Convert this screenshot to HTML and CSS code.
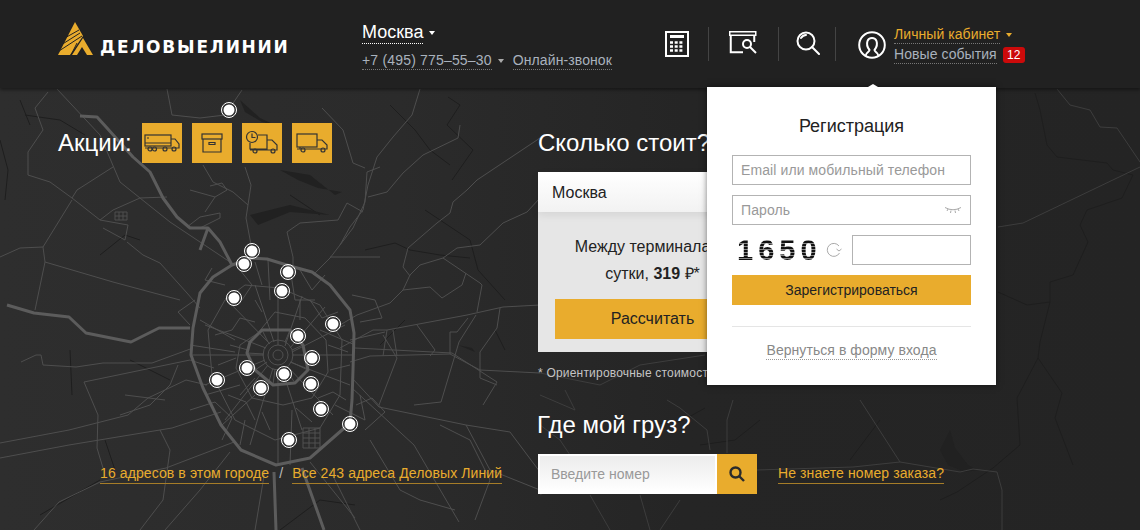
FILE: index.html
```html
<!DOCTYPE html>
<html lang="ru">
<head>
    <meta charset="UTF-8">
    <meta name="viewport" content="width=device-width, initial-scale=1.0">
    <link rel="stylesheet" href="styles.css">
    <title>Деловые Линии</title>
</head>
<body>
<div class="page">
    <svg class="map" width="1140" height="442" viewBox="0 88 1140 442">
        <g class="river">
            <path d="M1035 93L1040 110L1047 145L1057 157L1107 163L1113 170L1133 175L1122 198L1087 210L1080 225L1088 242L1073 275L1050 282L1050 302L1027 305L998 292"/>
            <path d="M1050 302L1040 342L1038 358L1017 398L1020 445L993 468L957 492L940 500"/>
            <path d="M1038 358L1062 393L1055 418L1073 465"/>
            <path d="M448 97L460 105L447 125L473 150L452 180M390 105L415 130L430 150L450 165M425 210L470 240L478 270L505 300"/>
            <path d="M365 250L395 243L410 250L440 255L470 258M405 320L380 345M495 330L505 350"/>
            <path d="M0 140L8 170L5 200M25 115L60 120L85 135M290 195L320 215M100 255L125 235L140 240M20 100L30 125"/>
            <path d="M70 350L72 395M105 440L115 470M280 530L320 500L355 505M40 515L100 480M130 360L170 380"/>
            <path d="M640 425L680 422L705 408M700 445L735 440L760 420M850 460L880 420"/>
        </g>
        <path class="lake" d="M240 100L260 118L275 125L262 122L245 112ZM280 170L310 175L335 195L342 192L318 188L298 180ZM250 215L290 205L330 215L290 212L258 225ZM458 345L475 352L472 348ZM950 430L955 448L968 465L978 470L965 472L948 465L940 450Z"/>
        <g class="road">
            <path d="M420 89L412 115L393 137L377 157L368 185L363 210L350 227L340 245M460 125L458 138L423 155L403 173L387 192L368 197"/>
            <path d="M540 138L477 180L467 190L453 202L450 213L437 223L408 248L403 267L410 276"/>
            <path d="M540 198L527 212L503 223L480 245L457 248L443 258L420 265L410 275L403 290L390 303L357 315L340 325"/>
            <path d="M443 258L480 283L482 285L477 312M340 348L373 330L387 330L467 315L503 307L540 305"/>
            <path d="M403 290L430 287L442 298L462 285L466 273M350 362L370 356L450 354L480 370L540 373"/>
            <path d="M417 325L435 350L430 356M387 330L383 356M393 330L397 356M450 354L450 332L457 332L468 318M500 308L497 328L480 352L480 378L497 385"/>
            <path d="M57 89L100 135L120 182L170 222L230 262M48 92L35 108L43 130L28 152L28 175L50 182L72 198L100 220L128 225L125 240L103 228"/>
            <path d="M167 89L172 115L200 118L225 115L242 90M72 198L77 190L113 167M0 257L20 248L43 247L45 262L113 282L180 300"/>
            <path d="M43 247L72 200M127 242L143 255L160 263L187 293L200 308M203 165L213 182L233 192L248 205M245 167L251 185L246 218L252 250"/>
            <path d="M187 227L200 217L220 213L220 218L200 228ZM380 167L367 172L365 202L353 228L330 258L313 275M330 257L380 257"/>
            <path d="M287 232L300 223L338 220L347 203L363 212M287 232L293 257L293 267M322 108L343 130L353 163L365 168M100 220L113 210L140 198L167 197"/>
            <path d="M115 212H127V220H115ZM119 212V220M123 212V220M115 216H127M45 262L35 310M190 190L215 197L227 190L222 183L210 186M205 212L215 197"/>
            <path d="M0 458L69 445L172 428L221 412M0 443L69 430L128 415L148 398L186 380L207 385M84 382L190 360L214 368M84 382L98 415L97 448L103 468"/>
            <path d="M34 530L59 502L100 482L166 468L234 442M21 362L36 355L41 355L43 365L76 367L103 363L152 363L193 348M355 348L452 353L497 382L483 405"/>
            <path d="M352 378L379 407L466 425L510 432L540 472M352 388L414 445L459 522M310 462L355 518M379 405L397 358L383 335M414 405L441 402L459 342L476 315"/>
            <path d="M120 415L150 405L170 385L178 365M125 395L165 400M160 430L170 450L163 500L140 530M230 452L200 490L165 530M265 470L255 530"/>
            <path d="M330 470L345 500L360 530M370 440L400 490L420 500L455 510M440 425L470 440L490 480L475 520M466 425L490 470L540 490"/>
        </g>
        <g class="road-far">
            <path d="M540 305L620 290L705 280M540 373L600 385L640 365L705 355"/>
            <path d="M667 400L680 408L707 430L710 450M733 400L727 420L727 453M860 400L900 462L960 472L973 469L997 472L1002 490L1002 530M757 470L853 467L900 462"/>
            <path d="M998 227L1023 223L1140 167M1057 89L1070 105L1090 110L1100 127L1117 128L1140 162"/>
            <path d="M540 495L580 470L560 440L540 425M590 495L610 530M640 495L650 530M680 500L660 530M540 395L575 410L565 390"/>
        </g>
        <g class="street">
            <path d="M278 345V288M285 346L302 296M290 348L325 307M292 352L345 325M292 355H352M290 362L350 385M287 366L333 415M282 369L302 430M278 369V465M273 368L250 445M268 365L225 420M265 360L205 385M264 355H192M266 348L205 325M270 344L225 298M274 342L255 285"/>
            <circle cx="278" cy="355" r="5"/>
            <circle cx="278" cy="355" r="10"/>
            <circle cx="278" cy="355" r="15"/>
            <path d="M258 333L240 345L236 368L252 398L283 405L312 398L328 372L326 340L305 318L275 312Z"/>
            <path d="M225 300L208 330L212 375L235 420L275 440L320 428L340 395L342 340L320 305L280 288L245 285Z"/>
            <path d="M255 262L262 285M268 260L270 300M290 268L295 300H315M300 270L312 290L325 275M200 320L235 340M190 345L235 352M205 395L240 385M222 425L255 395M290 465L292 410"/>
            <path d="M303 428H320V448H303ZM309 428V448M315 428V448M303 433H320M303 438H320M303 443H320"/>
            <path d="M225 285L205 280L212 268M300 300V320M350 340L385 332M320 330L355 345M335 405L365 420L360 395M245 420L240 445"/>
            <path d="M215 335L232 330L240 318L255 322M218 365L236 358M228 395L246 402L255 420M255 300L262 312M240 270L252 285L242 300M310 300L322 318L338 312"/>
            <path d="M328 345L348 352M330 370L350 365M318 398L333 392L346 400M296 408L312 422M262 412L270 430M255 378L240 395M248 350L230 345"/>
            <path d="M262 330L268 342M290 330L285 342M303 345L292 350M308 370L291 362M295 383L285 368M273 385L275 369M255 370L267 362M247 353L264 354"/>
            <path d="M190 410L215 402L232 418L222 440M195 300L178 312L190 325M352 295L375 300L382 318L360 322M356 405L372 398L385 412L365 430"/>
        </g>
        <g class="ring">
            <path d="M232 265L252 258L267 259L290 266L312 272L330 285L350 310L354 333L353 370L352 400L350 423L310 458L276 465L241 450L221 425L203 388L191 355L193 328L200 293L213 277L232 265"/>
            <path d="M262 330H290L303 345L308 370L295 383L273 385L255 370L247 353L250 342Z"/>
            <path d="M80 116L97 117L107 128L133 157L150 172L163 198L177 217L190 228L208 228L220 242L232 265M208 228L200 250"/>
            <path d="M7 305L34 313L69 317L86 333L131 342L159 328L190 328M274 472L276 530M302 468L324 530"/>
        </g>
        <g class="pin">
            <circle cx="229" cy="110" r="5.5"/><circle class="pin-ring" cx="229" cy="110" r="7.5"/>
            <circle cx="252" cy="251" r="5.5"/><circle class="pin-ring" cx="252" cy="251" r="7.5"/>
            <circle cx="244" cy="264" r="5.5"/><circle class="pin-ring" cx="244" cy="264" r="7.5"/>
            <circle cx="288" cy="272" r="5.5"/><circle class="pin-ring" cx="288" cy="272" r="7.5"/>
            <circle cx="282" cy="291" r="5.5"/><circle class="pin-ring" cx="282" cy="291" r="7.5"/>
            <circle cx="234" cy="298" r="5.5"/><circle class="pin-ring" cx="234" cy="298" r="7.5"/>
            <circle cx="333" cy="324" r="5.5"/><circle class="pin-ring" cx="333" cy="324" r="7.5"/>
            <circle cx="298" cy="336" r="5.5"/><circle class="pin-ring" cx="298" cy="336" r="7.5"/>
            <circle cx="312" cy="358" r="5.5"/><circle class="pin-ring" cx="312" cy="358" r="7.5"/>
            <circle cx="247" cy="368" r="5.5"/><circle class="pin-ring" cx="247" cy="368" r="7.5"/>
            <circle cx="284" cy="374" r="5.5"/><circle class="pin-ring" cx="284" cy="374" r="7.5"/>
            <circle cx="217" cy="380" r="5.5"/><circle class="pin-ring" cx="217" cy="380" r="7.5"/>
            <circle cx="261" cy="388" r="5.5"/><circle class="pin-ring" cx="261" cy="388" r="7.5"/>
            <circle cx="311" cy="384" r="5.5"/><circle class="pin-ring" cx="311" cy="384" r="7.5"/>
            <circle cx="321" cy="409" r="5.5"/><circle class="pin-ring" cx="321" cy="409" r="7.5"/>
            <circle cx="350" cy="424" r="5.5"/><circle class="pin-ring" cx="350" cy="424" r="7.5"/>
            <circle cx="289" cy="440" r="5.5"/><circle class="pin-ring" cx="289" cy="440" r="7.5"/>
        </g>
    </svg>

    <header class="top">
        <a class="logo">
            <svg width="36" height="34" viewBox="0 0 36 34">
                <path fill="#e9ac2d" d="M17 0L25 14L12 33H0Z"/>
                <path fill="#e9ac2d" d="M25 16L35 33H29L24 25L19 33H14Z"/>
                <path stroke="#212121" stroke-width="1" fill="none" d="M21 8L5 17M22 11L3 23M24 14L1 29M19 21L13 33"/>
            </svg>
            <span class="logo-text">ДЕЛОВЫЕЛИНИИ</span>
        </a>

        <div class="contacts">
            <div class="city-line"><span class="city">Москва</span><i class="caret caret-white"></i></div>
            <div class="phone-line">
                <span class="dotted phone">+7 (495) 775–55–30</span><i class="caret caret-gray"></i>
                <span class="dotted call">Онлайн-звонок</span>
            </div>
        </div>

        <nav class="tools">
            <a class="tool tool-calc">
                <svg width="24" height="26" viewBox="0 0 24 26" fill="none" stroke="#fff">
                    <rect x="1" y="1" width="22" height="24" stroke-width="2"/>
                    <path d="M5 5.5H19" stroke-width="3"/>
                    <path d="M5 11.5H19M5 15.5H19M5 19.5H19" stroke-width="2.5" stroke-dasharray="3 1.7"/>
                </svg>
            </a>
            <a class="tool tool-track">
                <svg width="28" height="23" viewBox="0 0 28 23" fill="none" stroke="#fff" stroke-width="1.500">
                    <rect x="0.750" y="0.750" width="26" height="3.500"/>
                    <path d="M1.750 4V21.250H14M25.250 4V11" stroke-width="2"/>
                    <circle cx="18" cy="13" r="4" stroke-width="2"/>
                    <path d="M21 16L27 22" stroke-width="2"/>
                </svg>
            </a>
            <a class="tool tool-search">
                <svg width="24" height="24" viewBox="0 0 24 24" fill="none" stroke="#fff" stroke-width="2">
                    <circle cx="10" cy="10" r="8.5"/>
                    <path d="M5 7Q7 4 10 4M16 16L23 23" stroke-linecap="round"/>
                </svg>
            </a>
        </nav>

        <div class="account">
            <svg class="avatar" width="28" height="28" viewBox="0 0 28 28" fill="none" stroke="#fff" stroke-width="2">
                <circle cx="14" cy="14" r="12.8"/>
                <path d="M7.5 25C8 21 11.5 21 11.5 19C9 16 8.500 13 9.500 10C11 6 17 6 18.500 10C19.500 13 19 16 16.500 19C16.500 21 20 21 20.500 25"/>
            </svg>
            <div class="account-links">
                <div class="account-row"><span class="dotted cabinet">Личный кабинет</span><i class="caret caret-amber"></i></div>
                <div class="account-row"><span class="dotted events">Новые события</span><span class="badge">12</span></div>
            </div>
        </div>
    </header>

    <main class="main">
        <section class="col-left">
            <div class="promo">
                <h2 class="promo-title">Акции:</h2>
                <a class="promo-tile">
                    <svg width="36" height="20" viewBox="0 0 36 20" fill="none" stroke="#333" stroke-width="1.200">
                        <rect x="1" y="2" width="26" height="11"/>
                        <path d="M1 10H27M27 6H31L35 11V15H1M3 5H5"/>
                        <circle cx="6" cy="16" r="2"/><circle cx="10.500" cy="16" r="2"/><circle cx="21" cy="16" r="2"/><circle cx="30" cy="16" r="2"/>
                    </svg>
                </a>
                <a class="promo-tile">
                    <svg width="22" height="20" viewBox="0 0 22 20" fill="none" stroke="#333" stroke-width="1.200">
                        <rect x="1" y="1" width="20" height="5"/>
                        <path d="M2 6V19H20V6M8 9.500H14V11.500H8Z"/>
                    </svg>
                </a>
                <a class="promo-tile">
                    <svg width="34" height="26" viewBox="0 0 34 26" fill="none" stroke="#333" stroke-width="1.200">
                        <circle cx="7" cy="7" r="5.500"/>
                        <path d="M7 3.500V7.500H10.500M13 5H22V19H5V13M22 10H27L32 15V20H5M22 20V10"/>
                        <circle cx="10" cy="21" r="2"/><circle cx="28" cy="21" r="2"/>
                    </svg>
                </a>
                <a class="promo-tile">
                    <svg width="32" height="20" viewBox="0 0 32 20" fill="none" stroke="#333" stroke-width="1.200">
                        <rect x="1" y="1" width="20" height="13"/>
                        <path d="M21 7H26L31 12V16H1M4 16V14"/>
                        <circle cx="7" cy="17" r="2"/><circle cx="27" cy="17" r="2"/>
                    </svg>
                </a>
            </div>
            <div class="addresses">
                <a class="amber-link">16 адресов в этом городе</a>
                <span class="slash">/</span>
                <a class="amber-link">Все 243 адреса Деловых Линий</a>
            </div>
        </section>

        <section class="col-right">
            <h2 class="section-title">Сколько стоит?</h2>
            <div class="calc-card">
                <div class="calc-city">Москва</div>
                <div class="calc-body">
                    <p class="calc-text">Между терминалами<br>сутки, <b>319</b> <span class="rub">₽</span>*</p>
                    <a class="btn btn-calc">Рассчитать</a>
                </div>
            </div>
            <p class="note">* Ориентировочные стоимости</p>

            <h2 class="section-title track-title">Где мой груз?</h2>
            <div class="track-row">
                <input class="track-input" placeholder="Введите номер">
                <button class="track-btn">
                    <svg width="16" height="16" viewBox="0 0 16 16" fill="none" stroke="#2b2b2b" stroke-width="2.400">
                        <circle cx="6.500" cy="6.500" r="5"/>
                        <path d="M10 10L15 15"/>
                    </svg>
                </button>
                <a class="amber-link no-order">Не знаете номер заказа?</a>
            </div>
        </section>
    </main>

    <div class="reg-box">
        <h3 class="reg-title">Регистрация</h3>
        <input class="field" placeholder="Email или мобильный телефон">
        <div class="password">
            <input class="field" placeholder="Пароль">
            <svg class="eye" width="18" height="8" viewBox="0 0 18 8" fill="none" stroke="#aaa">
                <path d="M1 1.500Q9 6 17 1.500M4 3L3 5M7 4.500L6.500 7M11 4.500L11.500 7M14 3L15 5"/>
            </svg>
        </div>
        <div class="captcha-row">
            <span class="captcha">1650</span>
            <svg class="reload" width="16" height="16" viewBox="0 0 16 16" fill="none" stroke="#aaa">
                <path d="M13.500 11A6.500 6.500 0 1 1 13 4M15.500 7L13 9L10.500 7"/>
            </svg>
            <input class="field captcha-input">
        </div>
        <a class="btn btn-reg">Зарегистрироваться</a>
        <hr class="reg-line">
        <a class="back-link">Вернуться в форму входа</a>
    </div>
</div>
</body>
</html>
```

FILE: styles.css
```css
* {
    box-sizing: border-box;
}

body {
    margin: 0;
    font-family: 'Liberation Sans', Arial, sans-serif;
    background-color: #262626;
}

.page {
    position: relative;
    width: 1140px;
    height: 530px;
    overflow: hidden;
    background: linear-gradient(to right, #2e2e2e 0%, #2b2b2b 35%, #252525 60%, #242424 100%);
}

.map {
    position: absolute;
    top: 88px;
    left: 0;
}

.map path, .map circle {
    fill: none;
    stroke-linejoin: round;
}

.river path {
    stroke: #1e1e1e;
    stroke-width: 1;
}

.map .lake {
    fill: #212121;
    stroke: none;
}

.road path {
    stroke: #4e4e4e;
    stroke-width: 1;
}

.road-far path {
    stroke: #3d3d3d;
    stroke-width: 1;
}

.street path, .street circle {
    stroke: #505050;
    stroke-width: 1;
}

.ring path {
    stroke: #5c5c5c;
    stroke-width: 3;
}

.pin circle {
    fill: #fff;
}

.map .pin-ring {
    fill: none;
    stroke: #fff;
    stroke-width: 1;
}

/* header */
.top {
    position: relative;
    display: flex;
    height: 88px;
    padding-left: 58px;
    background-color: #212121;
    box-shadow: 0 2px 3px rgba(0, 0, 0, 0.4);
}

.logo {
    display: flex;
    align-items: flex-end;
    gap: 6px;
    width: 304px;
    height: 56px;
    padding-top: 22px;
}

.logo-text {
    color: #fff;
    font-family: 'DejaVu Sans', sans-serif;
    font-size: 17px;
    font-weight: bold;
    line-height: 17px;
    letter-spacing: 1.75px;
    white-space: nowrap;
}

.contacts {
    width: 303px;
    padding-top: 21px;
}

.city-line {
    height: 31px;
    color: #fff;
}

.city {
    display: inline-block;
    height: 23px;
    font-size: 18px;
    line-height: 22px;
    border-bottom: 1px dotted #fff;
}

.caret {
    display: inline-block;
    margin-left: 6px;
    border: 3px solid transparent;
    border-bottom-width: 0;
    border-top-width: 4px;
    vertical-align: 3px;
}

.caret-white {
    border-top-color: #fff;
}

.caret-gray {
    border-top-color: #aaa;
}

.caret-amber {
    border-top-color: #e9ac2d;
}

.phone-line {
    display: flex;
    align-items: center;
    color: #a9b2bd;
    font-size: 14px;
    letter-spacing: 0.1px;
    white-space: nowrap;
}

.phone {
    letter-spacing: 0.18px;
}

.dotted {
    height: 18px;
    line-height: 17px;
    border-bottom: 1px dotted #777;
}

.call {
    margin-left: 9px;
}

.tools {
    display: flex;
    height: 34px;
    margin-top: 27px;
}

.tool {
    display: flex;
    align-items: flex-start;
    padding-top: 4px;
    border-right: 1px solid #444;
}

.tool-calc {
    width: 44px;
}

.tool-track {
    width: 70px;
    padding-left: 20px;
}

.tool-search {
    width: 57px;
    padding-left: 17px;
}

.account {
    display: flex;
    margin-left: 22px;
    padding-top: 31px;
}

.avatar {
    margin-right: 8px;
}

.account-links {
    margin-top: -6px;
    font-size: 14px;
    letter-spacing: 0.06px;
    white-space: nowrap;
}

.account-row {
    display: flex;
    align-items: center;
    height: 20px;
}

.cabinet {
    color: #e9ac2d;
}

.events {
    color: #a9b2bd;
}

.badge {
    width: 22px;
    height: 16px;
    margin-left: 6px;
    color: #fff;
    font-size: 12px;
    line-height: 16px;
    letter-spacing: 0;
    text-align: center;
    background-color: #cc0a0a;
    border-radius: 3px;
}

/* main part */
.main {
    position: relative;
    display: flex;
    height: 442px;
}

.col-left {
    display: flex;
    flex-direction: column;
    width: 538px;
    padding: 35px 0 46px 58px;
}

.promo {
    display: flex;
    align-items: center;
    gap: 10px;
}

.promo-title {
    width: 74px;
    margin: 0;
    color: #fff;
    font-size: 24px;
    font-weight: normal;
}

.promo-tile {
    display: flex;
    align-items: center;
    justify-content: center;
    width: 40px;
    height: 40px;
    background-color: #e9ac2d;
}

.addresses {
    display: flex;
    gap: 9px;
    margin-top: auto;
    margin-left: 42px;
    font-size: 14px;
    letter-spacing: 0.1px;
    white-space: nowrap;
}

.amber-link {
    height: 19px;
    color: #e9ac2d;
    line-height: 17px;
    border-bottom: 1px solid #a67d28;
}

.slash {
    width: 4px;
    color: #bbb;
    line-height: 17px;
    margin: 0 0 0 1px;
}

.col-right {
    width: 420px;
    padding-top: 40px;
}

.section-title {
    margin: 0;
    color: #fff;
    font-size: 24px;
    font-weight: normal;
    line-height: 30px;
}

.calc-card {
    width: 229px;
    height: 180px;
    margin-top: 14px;
    background-color: #e6e6e6;
}

.calc-city {
    height: 40px;
    padding-left: 14px;
    color: #222;
    font-size: 16px;
    line-height: 41px;
    background: linear-gradient(to bottom, #fff, #f2f2f2);
    box-shadow: 0 3px 8px rgba(0, 0, 0, 0.08);
}

.calc-body {
    padding: 0 17px;
    text-align: center;
}

.calc-text {
    height: 87px;
    margin: 0;
    padding-top: 21px;
    color: #222;
    font-size: 16px;
    line-height: 27px;
    white-space: nowrap;
}

.rub {
    font-size: 16px;
}

.btn {
    display: block;
    color: #222;
    text-align: center;
    background-color: #e9ac2d;
}

.btn-calc {
    height: 40px;
    font-size: 16px;
    line-height: 40px;
}

.note {
    margin: 13px 0 0;
    color: #c4c4c4;
    font-size: 12px;
    line-height: 16px;
    letter-spacing: 0.2px;
}

.track-title {
    margin-top: 29px;
    margin-left: -1px;
}

.track-row {
    display: flex;
    align-items: center;
    margin-top: 14px;
}

.track-input {
    width: 179px;
    height: 40px;
    padding: 0 11px;
    font-family: inherit;
    font-size: 14px;
    background: linear-gradient(to bottom, #ececec, #fff);
    border: 2px solid #fff;
    border-radius: 0;
    outline: none;
}

.track-input::placeholder {
    color: #999;
}

.track-btn {
    display: flex;
    align-items: center;
    justify-content: center;
    width: 40px;
    height: 40px;
    padding: 0;
    background-color: #e9ac2d;
    border: none;
}

.no-order {
    margin-left: 21px;
    font-size: 14px;
    letter-spacing: 0.1px;
}

/* registration dropdown */
.reg-box {
    position: absolute;
    top: 87px;
    left: 707px;
    width: 289px;
    height: 298px;
    padding: 27px 25px 0;
    background-color: #fff;
    box-shadow: 0 0 6px rgba(0, 0, 0, 0.5);
}

.reg-box::before {
    content: '';
    position: absolute;
    top: -3px;
    left: 161px;
    border: 5px solid transparent;
    border-top-width: 0;
    border-bottom: 3px solid #fff;
}

.reg-title {
    margin: 0 0 17px;
    color: #222;
    font-size: 18px;
    font-weight: normal;
    line-height: 24px;
    text-align: center;
}

.field {
    display: block;
    width: 100%;
    height: 30px;
    padding: 0 8px;
    font-family: inherit;
    font-size: 14px;
    letter-spacing: 0.1px;
    background-color: #fff;
    border: 1px solid #b3b3b3;
    border-radius: 0;
    outline: none;
}

.field::placeholder {
    color: #999;
}

.password {
    position: relative;
    margin-top: 10px;
}

.eye {
    position: absolute;
    top: 11px;
    right: 9px;
}

.captcha-row {
    display: flex;
    align-items: center;
    height: 30px;
    margin-top: 10px;
    padding-left: 5px;
}

.captcha {
    width: 84px;
    color: transparent;
    font-size: 29px;
    font-weight: bold;
    line-height: 30px;
    letter-spacing: 5px;
    background: repeating-linear-gradient(to bottom, #111 0, #111 2px, #888 2px, #888 3px);
    -webkit-background-clip: text;
    background-clip: text;
}

.reload {
    margin-left: 5px;
}

.captcha-input {
    width: 119px;
    margin-left: auto;
}

.btn-reg {
    height: 30px;
    margin-top: 10px;
    font-size: 14px;
    line-height: 30px;
}

.reg-line {
    height: 1px;
    margin: 21px 0 0;
    background-color: #e5e5e5;
    border: none;
}

.back-link {
    display: table;
    margin: 15px auto 0;
    color: #888;
    font-size: 14px;
    line-height: 17px;
    letter-spacing: 0.06px;
    border-bottom: 1px dotted #999;
}
```
